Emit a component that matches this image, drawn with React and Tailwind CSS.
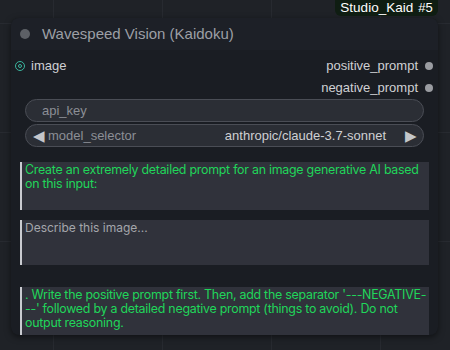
const sans = { fontFamily: '"Liberation Sans", Arial, sans-serif' };
const inter = { fontFamily: 'Inter, "Noto Sans", sans-serif' };

const OutputRow = ({ label }) => (
	<div className="flex items-center justify-end h-[22px] pr-[5px]">
		<span className="text-[13px] text-[#cfd0d3]">{label}</span>
		<span className="ml-[7px] w-[8px] h-[8px] rounded-full bg-[#9a9ca1]" />
	</div>
);

const Prompt = ({ text, height, muted }) => (
	<div
		className={`mx-[9px] border-l-2 border-[#c9cbd0] bg-[#30323b] pl-[3px] pr-0 pt-[1px] leading-[14px] ${
			muted ? "text-[12px] text-[#a4a6ab]" : "text-[12.4px] tracking-[-0.25px] text-[#20d65a]"
		} ${height}`}
		style={inter}
	>
		{text}
	</div>
);

const App = () => {
	return (
		<div
			className="w-[450px] h-[350px] overflow-hidden bg-[#1f2227] bg-[linear-gradient(to_right,#272a30_1px,transparent_1px),linear-gradient(to_bottom,#272a30_1px,transparent_1px)] bg-[size:109px_109px] bg-[position:53px_23px]"
			style={sans}
		>
			{/* Badge */}
			<div className="flex justify-end pr-[12px]">
				<div className="w-[103px] h-[16px] bg-[#0f1d12] rounded-b-md flex items-end justify-center gap-[5px] pb-[2px] text-[13.5px] leading-none text-white">
					<span>Studio_Kaid</span>
					<span className="text-[13px]">#5</span>
				</div>
			</div>

			{/* Node */}
			<div className="mt-[2px] ml-[11px] w-[427px] h-[317px] rounded-lg bg-[#1a1d23] shadow-[0_2px_6px_rgba(0,0,0,0.5)] overflow-hidden flex flex-col">
				<div className="h-[32px] shrink-0 bg-[#1d2027] flex items-center pl-[9px]">
					<span className="w-[10px] h-[10px] rounded-full bg-[#5d6066]" />
					<span className="ml-[12px] text-[15px] text-[#9c9fa5]">Wavespeed Vision (Kaidoku)</span>
				</div>

				<div className="pt-[5px]">
					<div className="flex items-center h-[22px]">
						<div className="flex items-center flex-1 pl-[4px]">
							<span className="w-[10px] h-[10px] rounded-full border border-[#3bb59e] flex items-center justify-center">
								<span className="w-[4px] h-[4px] rounded-full border border-[#3bb59e]" />
							</span>
							<span className="ml-[6px] text-[13px] text-[#cfd0d3]">image</span>
						</div>
						<OutputRow label="positive_prompt" />
					</div>
					<OutputRow label="negative_prompt" />
				</div>

				<div className="mx-[14px] flex flex-col gap-[2px]">
					<div className="h-[23px] rounded-full border border-[#4a4d55] bg-[#2b2e35] flex items-center pl-[16px] text-[13px] text-[#8c8f95]">
						api_key
					</div>
					<div className="h-[23px] rounded-full border border-[#4a4d55] bg-[#2b2e35] flex items-center pl-[7px] pr-[6px] text-[13px]">
						<span className="text-[#c4c6ca] text-[15px] leading-none">◀</span>
						<span className="ml-[3px] text-[#8c8f95]">model_selector</span>
						<span className="ml-auto text-[#cfd0d3]">anthropic/claude-3.7-sonnet</span>
						<span className="ml-[19px] text-[#c4c6ca] text-[15px] leading-none">▶</span>
					</div>
				</div>

				<div className="mt-[15px] flex flex-col">
					<Prompt
						height="h-[48px]"
						text="Create an extremely detailed prompt for an image generative AI based on this input:"
					/>
					<div className="h-[10px]" />
					<Prompt height="h-[45px]" muted text="Describe this image..." />
					<div className="h-[22px]" />
					<Prompt
						height="h-[48px]"
						text=". Write the positive prompt first. Then, add the separator '---NEGATIVE---' followed by a detailed negative prompt (things to avoid). Do not output reasoning."
					/>
				</div>
			</div>
		</div>
	);
};

export default App;
